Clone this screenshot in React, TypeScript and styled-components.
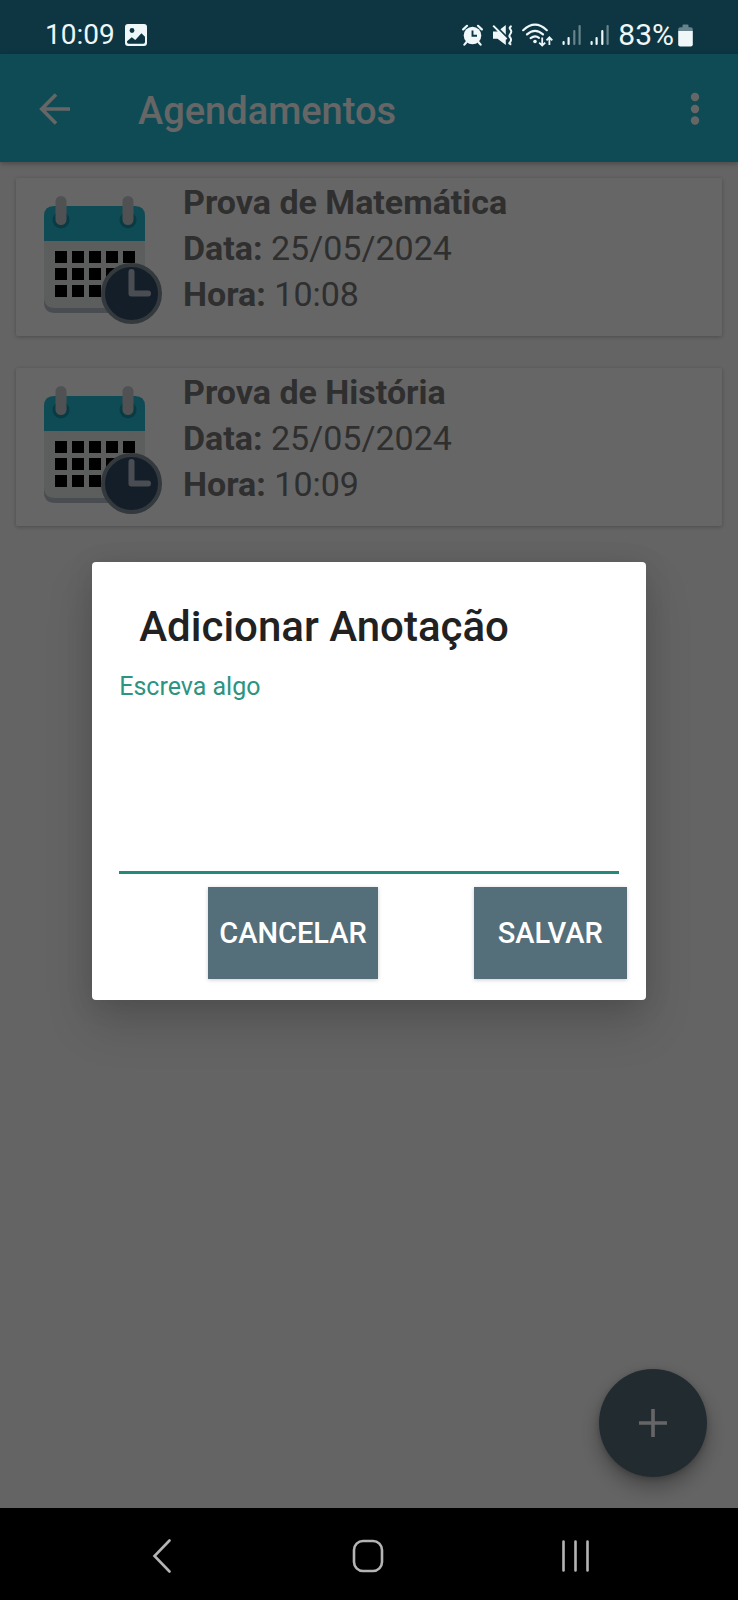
import React, { useState } from "react";
import styled, { createGlobalStyle } from "styled-components";

const GlobalStyle = createGlobalStyle`
  *, *::before, *::after { box-sizing: border-box; }
  body { margin: 0; background: #000; font-family: Roboto, "Noto Sans", sans-serif; }
  button, textarea { font: inherit; }
`;

const Screen = styled.div`
  min-height: 100vh;
  display: flex;
  flex-direction: column;
  background: #fafafa;
`;

const StatusBar = styled.div`
  height: 54px;
  padding: 15px 45px 0 45px;
  display: flex;
  justify-content: space-between;
  align-items: flex-start;
  background: #0d3642;
  color: #eff7f9;
  font-size: 28px;
  line-height: 40px;
`;

const StatusGroup = styled.div<{ $gap: number }>`
  display: flex;
  align-items: center;
  gap: ${(p) => p.$gap}px;
  svg { display: block; flex: none; }
`;

const BatteryLevel = styled.span`
  display: flex;
  align-items: center;
  gap: 4px;
  font-size: 30px;
`;

const Window = styled.div`
  position: relative;
  flex: 1;
  display: flex;
  flex-direction: column;
`;

const AppBar = styled.header`
  height: 108px;
  padding: 2px 15px 0 27px;
  display: flex;
  align-items: center;
  background: #26bbd3;
  color: #fff;
  box-shadow: 0 2px 5px rgba(0, 0, 0, 0.25);
`;

const AppTitle = styled.h1`
  flex: 1;
  margin: 0 0 0 55px;
  padding-top: 4px;
  font-size: 38px;
  line-height: 48px;
  font-weight: 500;
`;

const IconButton = styled.button`
  width: 56px;
  height: 56px;
  padding: 0;
  display: flex;
  align-items: center;
  justify-content: center;
  border: 0;
  background: none;
  color: inherit;
`;

const List = styled.ul`
  flex: 1;
  margin: 0;
  padding: 16px;
  display: flex;
  flex-direction: column;
  gap: 32px;
  list-style: none;
`;

const Card = styled.li`
  min-height: 158px;
  padding: 1px 28px 0 27px;
  display: flex;
  gap: 20px;
  border-radius: 2px;
  background: #fff;
  box-shadow: 0 1px 4px rgba(0, 0, 0, 0.25);
  svg { flex: none; margin-top: 16px; }
`;

const CardText = styled.div`
  color: #757575;
  font-size: 34px;
  line-height: 46px;
`;

const CardTitle = styled.h2`
  margin: 0;
  font: inherit;
  font-weight: 700;
`;

const CardLine = styled.p`
  margin: 0;
`;

const Fab = styled.button`
  position: absolute;
  right: 31px;
  bottom: 31px;
  width: 108px;
  height: 108px;
  padding: 0;
  display: flex;
  align-items: center;
  justify-content: center;
  border: 0;
  border-radius: 50%;
  background: #566e79;
  color: #fff;
  box-shadow: 0 10px 20px rgba(0, 0, 0, 0.3), 0 2px 6px rgba(0, 0, 0, 0.2);
`;

const Scrim = styled.div`
  position: absolute;
  inset: 0;
  display: flex;
  align-items: center;
  justify-content: center;
  background: rgba(0, 0, 0, 0.6);
`;

const Dialog = styled.form`
  width: 75%;
  padding: 35px 19px 21px 27px;
  display: flex;
  flex-direction: column;
  border-radius: 4px;
  background: #fff;
  box-shadow: 0 24px 48px rgba(0, 0, 0, 0.16), 0 4px 28px rgba(0, 0, 0, 0.1);
`;

const DialogTitle = styled.h2`
  margin: 0 0 13px 20px;
  color: #212121;
  font-size: 42px;
  line-height: 60px;
  font-weight: 500;
`;

const Field = styled.div`
  margin-right: 8px;
  display: flex;
  flex-direction: column;
`;

const FieldLabel = styled.label`
  color: #2b9482;
  font-size: 25px;
  line-height: 34px;
`;

const NoteInput = styled.textarea`
  height: 170px;
  padding: 8px 0;
  border: 0;
  border-bottom: 3px solid #26877b;
  outline: 0;
  resize: none;
  background: transparent;
  color: #212121;
  font-size: 34px;
  line-height: 46px;
`;

const Actions = styled.div`
  margin-top: 13px;
  display: flex;
  justify-content: flex-end;
  gap: 96px;
`;

const ActionButton = styled.button`
  min-width: 153px;
  height: 92px;
  padding: 0 11px;
  border: 0;
  background: #546e7a;
  color: #fff;
  font-size: 29px;
  line-height: 40px;
  font-weight: 500;
  text-transform: uppercase;
  box-shadow: 0 1px 4px rgba(0, 0, 0, 0.2);
`;

const NavBar = styled.nav`
  height: 92px;
  padding: 3px 58px 0;
  display: flex;
  align-items: center;
  justify-content: space-around;
  background: #000;
  color: #b4b4b4;
`;

const PictureIcon = () => (
  <svg width="22" height="22" viewBox="0 0 22 22" aria-hidden="true">
    <rect width="22" height="22" rx="3" fill="currentColor" />
    <circle cx="7" cy="6.5" r="2.4" fill="#0d3642" />
    <path d="M2 17.2 6.8 13.2 10.3 16 16.4 9.2 20 12.8V18q0 1.7-1.7 1.7H3.7Q2 19.7 2 18Z" fill="#0d3642" />
  </svg>
);

const AlarmIcon = () => (
  <svg width="21" height="22" viewBox="0 0 21 22" fill="none" aria-hidden="true">
    <circle cx="10.5" cy="11.5" r="8.8" fill="currentColor" />
    <path d="M1.2 5.4 5 1.8M19.8 5.4 16 1.8M4.6 18 2.4 20.6M16.4 18l2.2 2.6" stroke="currentColor" strokeWidth="2.2" strokeLinecap="round" />
    <path d="M10.5 6.4v5.4H15" stroke="#0d3642" strokeWidth="1.9" />
  </svg>
);

const MuteIcon = () => (
  <svg width="21" height="22" viewBox="0 0 21 22" fill="none" aria-hidden="true">
    <path d="M1 7.5H5.5L13.8 1V21L5.5 14.8H1Z" fill="currentColor" />
    <path d="M2.7.9 16 14.4" stroke="#0d3642" strokeWidth="2.2" />
    <path d="M1.2 1.6 14.6 15.2" stroke="currentColor" strokeWidth="2" />
    <path d="M19.6 2q-2.8 1.5-1.5 3t1.2 2.7-1.3 2.8 0 2.8 1 2.8-1.4 2.6 1.7 1.8" stroke="currentColor" strokeWidth="2" />
  </svg>
);

const WifiIcon = () => (
  <svg width="31" height="24" viewBox="0 0 31 24" fill="none" stroke="currentColor" strokeLinecap="round" aria-hidden="true">
    <path d="M1.2 7.2Q13 -3.8 24.8 7.2" strokeWidth="2.2" />
    <path d="M5 11.4Q13 4.2 21 11.4" strokeWidth="2.2" />
    <path d="M8.6 15.2Q13 11.8 17 14.8" strokeWidth="2.1" />
    <circle cx="13" cy="18.5" r="1.8" fill="currentColor" stroke="none" />
    <path d="M20.2 14.5v7.5M17.2 19.6l3 3 3-3M27.4 22v-7.5M24.5 17.3l2.9-3 2.9 3" strokeWidth="1.8" strokeLinecap="butt" />
  </svg>
);

const SignalIcon = ({ level }: { level: number }) => (
  <svg width="19" height="22" viewBox="0 0 19 22" aria-hidden="true">
    {[17, 13, 6, 1].map((top, i) => (
      <rect key={top} x={[0.5, 5.5, 11.2, 16.5][i]} y={top} width="2.2" height={21 - top} rx="1" fill="currentColor" opacity={i < level ? 1 : 0.4} />
    ))}
  </svg>
);

const BatteryIcon = () => (
  <svg width="15" height="23" viewBox="0 0 15 23" fill="currentColor" aria-hidden="true">
    <path d="M4.5 1.2Q4.5.4 5.5.4h4q1 0 1 .8v2h2q2.3 0 2.3 2V7H.2V5.2q0-2 2.3-2h2z" opacity="0.4" />
    <path d="M.2 7H14.8V20.5q0 2.1-2.1 2.1H2.3Q.2 22.6.2 20.5Z" />
  </svg>
);

const BackIcon = () => (
  <svg width="32" height="32" viewBox="0 0 32 32" fill="none" stroke="currentColor" strokeWidth="3.6" aria-hidden="true">
    <path d="M31 16H3M17 1.5 2.7 16 17 30.5" />
  </svg>
);

const MoreIcon = () => (
  <svg width="10" height="34" viewBox="0 0 10 34" fill="currentColor" aria-hidden="true">
    <circle cx="5" cy="5" r="4.2" />
    <circle cx="5" cy="17" r="4.2" />
    <circle cx="5" cy="28.5" r="4.2" />
  </svg>
);

const PlusIcon = () => (
  <svg width="28" height="28" viewBox="0 0 28 28" stroke="currentColor" strokeWidth="3.6" aria-hidden="true">
    <path d="M14 0v28M0 14h28" />
  </svg>
);

const CalendarIcon = () => (
  <svg width="120" height="130" viewBox="0 0 120 130" aria-hidden="true">
    <path d="M1 95H102V107Q102 118 91 118H12Q1 118 1 107Z" fill="#b7bfca" />
    <path d="M1 40H102V102Q102 113 91 113H12Q1 113 1 102Z" fill="#e5eaeb" />
    <path d="M1 46V21Q1 11 11 11H92Q102 11 102 21V46Z" fill="#26bbd3" />
    {[18, 85].map((x) => (
      <g key={x}>
        <circle cx={x} cy="25" r="8.5" fill="#1694a9" />
        <rect x={x - 5.5} y="1" width="11" height="29" rx="5.5" fill="#c9cbd0" />
      </g>
    ))}
    {[56, 73, 90].map((y) =>
      [12, 29, 46, 63, 80].map((x) => (
        <rect key={`${x}-${y}`} x={x} y={y} width="12" height="12" fill="#000" />
      ))
    )}
    <circle cx="88.5" cy="98.5" r="28.5" fill="#344c68" stroke="#7f8f96" strokeWidth="4" />
    <path d="M88.5 77V98.5H105" fill="none" stroke="#bac4d0" strokeWidth="6" strokeLinecap="round" strokeLinejoin="round" />
  </svg>
);

const NavBackIcon = () => (
  <svg width="34" height="34" viewBox="0 0 34 34" fill="none" stroke="currentColor" strokeWidth="2.6" strokeLinecap="round" aria-hidden="true">
    <path d="M24.5 1.5 9.5 17 24.5 32.5" />
  </svg>
);

const NavHomeIcon = () => (
  <svg width="34" height="34" viewBox="0 0 34 34" fill="none" stroke="currentColor" strokeWidth="2.6" aria-hidden="true">
    <rect x="2" y="2" width="28" height="30" rx="9" />
  </svg>
);

const NavRecentsIcon = () => (
  <svg width="34" height="34" viewBox="0 0 34 34" fill="none" stroke="currentColor" strokeWidth="2.6" strokeLinecap="round" aria-hidden="true">
    <path d="M4.5 2.5v29M16.500 2.5v29M28.500 2.5v29" />
  </svg>
);

const appointments = [
  { title: "Prova de Matemática", date: "25/05/2024", time: "10:08" },
  { title: "Prova de História", date: "25/05/2024", time: "10:09" },
];

export default function App() {
  const [note, setNote] = useState("");

  return (
    <>
      <GlobalStyle />
      <Screen>
        <StatusBar>
          <StatusGroup $gap={10}>
            <span>10:09</span>
            <PictureIcon />
          </StatusGroup>
          <StatusGroup $gap={9}>
            <AlarmIcon />
            <MuteIcon />
            <WifiIcon />
            <SignalIcon level={2} />
            <SignalIcon level={3} />
            <BatteryLevel>
              83%
              <BatteryIcon />
            </BatteryLevel>
          </StatusGroup>
        </StatusBar>

        <Window>
          <AppBar>
            <IconButton type="button" aria-label="Voltar">
              <BackIcon />
            </IconButton>
            <AppTitle>Agendamentos</AppTitle>
            <IconButton type="button" aria-label="Mais opções">
              <MoreIcon />
            </IconButton>
          </AppBar>

          <List>
            {appointments.map((item) => (
              <Card key={item.title}>
                <CalendarIcon />
                <CardText>
                  <CardTitle>{item.title}</CardTitle>
                  <CardLine>
                    <b>Data:</b> {item.date}
                  </CardLine>
                  <CardLine>
                    <b>Hora:</b> {item.time}
                  </CardLine>
                </CardText>
              </Card>
            ))}
          </List>

          <Fab type="button" aria-label="Adicionar agendamento">
            <PlusIcon />
          </Fab>

          <Scrim>
            <Dialog role="dialog" aria-modal="true" aria-labelledby="dialog-title" onSubmit={(e) => e.preventDefault()}>
              <DialogTitle id="dialog-title">Adicionar Anotação</DialogTitle>
              <Field>
                <FieldLabel htmlFor="note">Escreva algo</FieldLabel>
                <NoteInput id="note" value={note} onChange={(e) => setNote(e.target.value)} />
              </Field>
              <Actions>
                <ActionButton type="button">Cancelar</ActionButton>
                <ActionButton type="submit">Salvar</ActionButton>
              </Actions>
            </Dialog>
          </Scrim>
        </Window>

        <NavBar aria-label="Sistema">
          <IconButton type="button" aria-label="Voltar à tela anterior">
            <NavBackIcon />
          </IconButton>
          <IconButton type="button" aria-label="Início">
            <NavHomeIcon />
          </IconButton>
          <IconButton type="button" aria-label="Recentes">
            <NavRecentsIcon />
          </IconButton>
        </NavBar>
      </Screen>
    </>
  );
}
